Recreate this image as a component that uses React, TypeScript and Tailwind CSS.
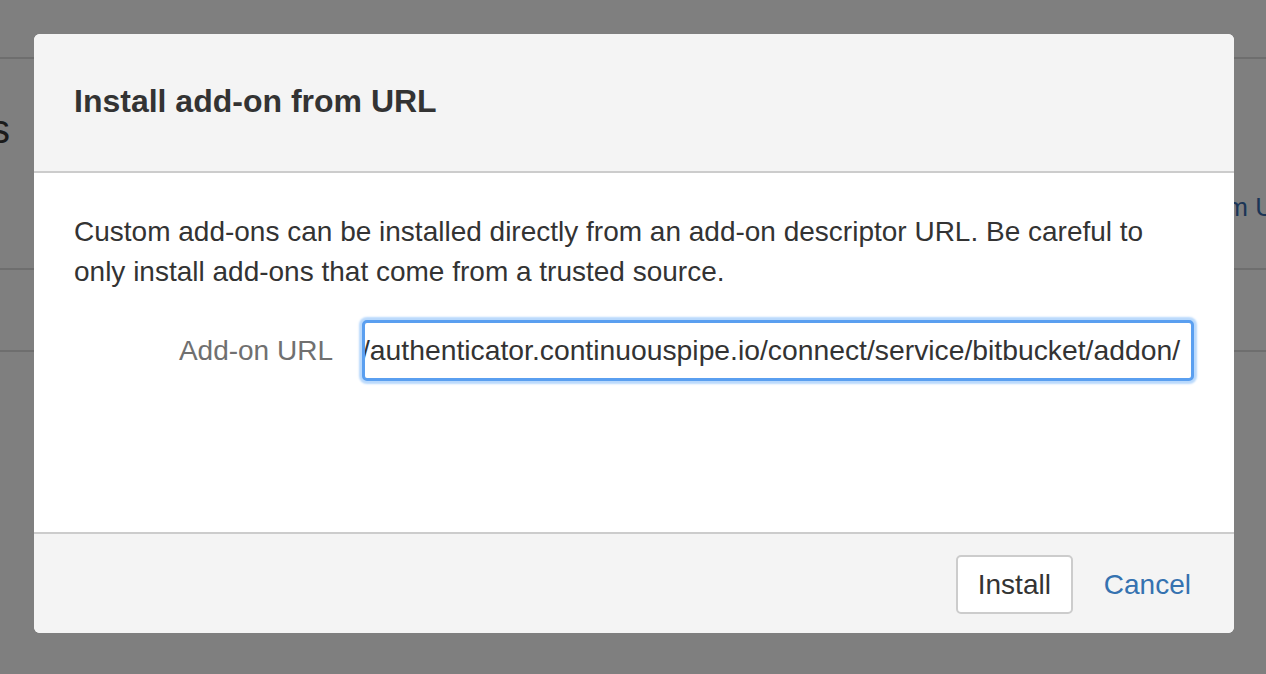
export default function App() {
  const font = { fontFamily: '"Liberation Sans", Arial, Helvetica, sans-serif' };
  return (
    <div className="relative w-[1266px] h-[674px] overflow-hidden bg-[#7f7f7f]" style={font}>
      {/* page behind the overlay */}
      <div className="flex flex-col">
        <div className="h-[57px]" />
        <div className="h-[2px] bg-[#6e6e6e]" />
        <div className="h-[209px] flex justify-between">
          <span className="mt-[50px] -ml-[10px] text-[40px] leading-[40px] text-[#1b1b1b]">s</span>
          <span className="mt-[133px] -mr-[8px] text-[26px] leading-[30px] text-[#1b3556]">m U</span>
        </div>
        <div className="h-[2px] bg-[#6e6e6e]" />
        <div className="h-[80px]" />
        <div className="h-[2px] bg-[#6e6e6e]" />
      </div>

      {/* dialog */}
      <div className="absolute left-[34px] top-[34px] w-[1200px] h-[599px] rounded-[6px] overflow-hidden bg-white flex flex-col">
        <div className="h-[137px] bg-[#f4f4f4] flex items-center px-[40px]">
          <h2 className="text-[32px] font-bold text-[#333] mt-[-4px]">Install add-on from URL</h2>
        </div>
        <div className="h-[2px] bg-[#cccccc]" />
        <div className="flex-1 bg-white px-[40px] pt-[39px]">
          <p className="text-[28px] leading-[40px] text-[#333] w-[1100px]">
            Custom add-ons can be installed directly from an add-on descriptor URL. Be careful to only install add-ons that come from a trusted source.
          </p>
          <div className="flex items-center mt-[28px]">
            <label className="w-[259px] text-right text-[28px] leading-[32px] text-[#707070]">Add-on URL</label>
            <div className="ml-[29px] w-[832px] h-[61px] rounded-[5px] border-[3px] border-[#5a9ff0] bg-white shadow-[0_0_2px_3px_#b9d9fc] flex justify-end items-center overflow-hidden whitespace-nowrap pr-[11px]">
              <span className="text-[28.3px] text-[#333]">https://authenticator.continuouspipe.io/connect/service/bitbucket/addon/</span>
            </div>
          </div>
        </div>
        <div className="h-[2px] bg-[#cccccc]" />
        <div className="h-[99px] bg-[#f4f4f4] flex items-center justify-end pr-[43px]">
          <button className="w-[117px] h-[59px] rounded-[5px] border-2 border-[#cccccc] bg-white text-[28px] text-[#333] mt-[2px]">Install</button>
          <a className="ml-[31px] text-[28px] text-[#3572b0] mt-[2px]">Cancel</a>
        </div>
      </div>
    </div>
  );
}
